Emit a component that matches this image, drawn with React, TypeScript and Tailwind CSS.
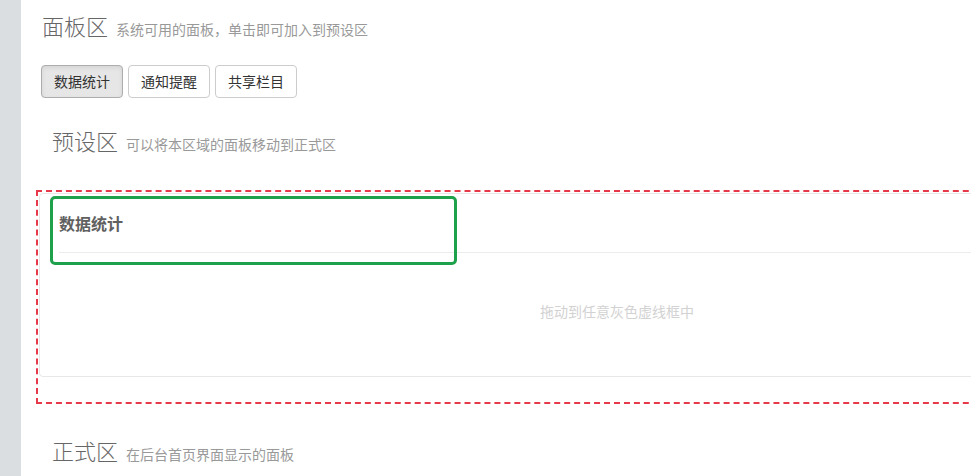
const font = "font-['Noto_Sans_CJK_SC','Noto_Sans',sans-serif]";

const panels = ['数据统计', '通知提醒', '共享栏目'];

function SectionTitle({ title, hint, indent }: { title: string; hint: string; indent?: boolean }) {
  return (
    <div className={`flex items-baseline h-[30px] ${indent ? 'pl-[31px]' : 'pl-[21px]'}`}>
      <span className="text-[22px] leading-[24px] font-light text-[#666]">{title}</span>
      <span className="ml-[8px] text-[14px] text-[#999]">{hint}</span>
    </div>
  );
}

export default function App() {
  return (
    <div className={`flex h-screen overflow-hidden bg-white ${font}`}>
      <div className="w-[21px] shrink-0 bg-[#dadee1]" />
      <div className="flex-1 min-w-0 pt-[13px]">
        <SectionTitle title="面板区" hint="系统可用的面板，单击即可加入到预设区" />

        <div className="mt-[22px] pl-[20px] flex gap-[5px]">
          {panels.map((p, i) => (
            <button
              key={p}
              className={`h-[33px] w-[82px] rounded-[4px] border text-[14px] text-[#333] ${
                i === 0 ? 'bg-[#e6e6e6] border-[#adadad] shadow-[inset_0_2px_4px_rgba(0,0,0,0.08)]' : 'bg-white border-[#ccc]'
              }`}
            >
              {p}
            </button>
          ))}
        </div>

        <div className="mt-[30px]">
          <SectionTitle title="预设区" hint="可以将本区域的面板移动到正式区" indent />
        </div>

        {/* drop zone */}
        <div className="mt-[32px] ml-[15px] w-[1162px] h-[214px] border-2 border-dashed border-[#e63a4b] p-px">
          <div className="relative border border-[#e8e8e8] rounded-[4px]">
            <div className="h-[58px] flex items-center pl-[19px] text-[16px] font-bold text-[#606060]">数据统计</div>
            <div className="ml-[19px] border-b border-[#ececec]" />
            <div className="h-[123px] pb-[6px] flex items-center justify-center text-[14px] text-[#d2d2d2]">
              拖动到任意灰色虚线框中
            </div>
            {/* dragged item outline */}
            <div className="absolute left-[10px] top-[2px] w-[407px] h-[69px] rounded-[5px] border-[3px] border-[#1fa14c]" />
          </div>
        </div>

        <div className="mt-[34px]">
          <SectionTitle title="正式区" hint="在后台首页界面显示的面板" indent />
        </div>
      </div>
    </div>
  );
}
